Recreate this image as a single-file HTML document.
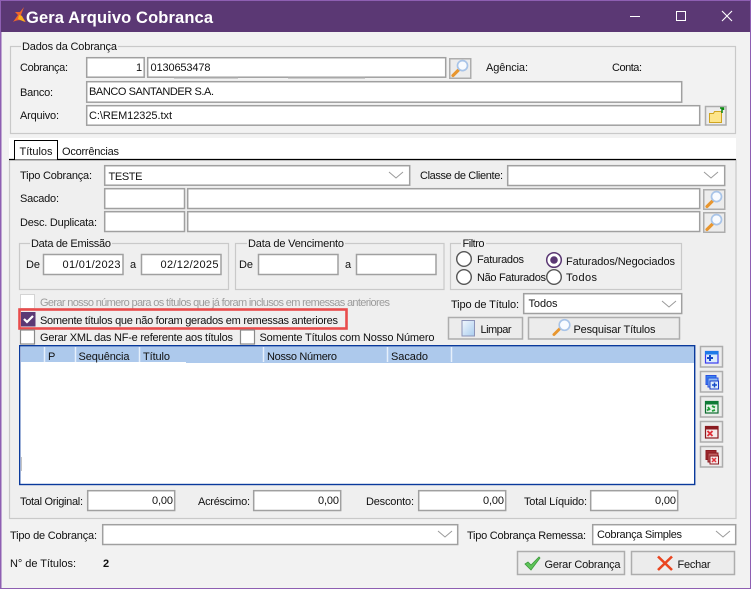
<!DOCTYPE html>
<html><head><meta charset="utf-8">
<style>
html,body{margin:0;padding:0;width:751px;height:589px;overflow:hidden;background:#f2f2f2}
svg{display:block}
text{font-family:"Liberation Sans",sans-serif;font-size:11px;fill:#111}
.f{fill:#fff;stroke:#a0a0a0;stroke-width:1.5}
.g{fill:none;stroke:#c9c9c9;stroke-width:1.2}
.b{fill:#ececec;stroke:#adadad;stroke-width:1.5}
.r{fill:#fff;stroke:#555;stroke-width:1.4}
.c{fill:#fff;stroke:#8a8a8a;stroke-width:1.2}
.h{stroke:#e6f0fb;stroke-width:1.5}
</style></head><body>
<svg width="751" height="589" viewBox="0 0 751 589" xmlns="http://www.w3.org/2000/svg">
<defs>
<linearGradient id="lg" x1="0" y1="0" x2="1" y2="1"><stop offset="0" stop-color="#f2f7fd"/><stop offset="1" stop-color="#a9cdef"/></linearGradient>
<g id="mag"><rect width="21" height="19.500" class="b" x=".75" y=".75"/><path d="M4 17.500L10 11.500" stroke="#e8962e" stroke-width="3.200" stroke-linecap="round"/><circle cx="13.500" cy="7.600" r="5" fill="#f8fbff" stroke="#a8c4e8" stroke-width="1.700"/></g>
<g id="chev"><path d="M0 0l7 6 7-6" fill="none" stroke="#9a9a9a" stroke-width="1"/></g>
</defs>
<!-- window -->
<rect width="751" height="589" fill="#8e5fb2"/>
<rect x="1.500" y="1" width="748.500" height="587" fill="#f2f2f2"/>
<rect x="1" y="1" width="749" height="31" fill="#5b3874"/>
<path d="M13 22l5-7 -3-3h5l4-5-3 8 5 7c-4-2-8-3-13 0z" fill="#f0662a"/><path d="M19 15l3 1 3 6-7-3z" fill="#f7b21c"/>
<text x="26" y="23" textLength="187" style="font-size:16.500px;font-weight:bold;fill:#fff">Gera Arquivo Cobranca</text>
<path d="M630 16.500h10" stroke="#fff" stroke-width="1"/>
<rect x="676.500" y="11.500" width="9" height="9" fill="none" stroke="#fff"/>
<path d="M722 11l10 10M732 11l-10 10" stroke="#fff" stroke-width="1.100"/>

<!-- dados -->
<rect x="10.500" y="46.500" width="725" height="87" class="g"/>
<rect x="21" y="40" width="97" height="12" fill="#f2f2f2"/>
<text x="22" y="50" textLength="95">Dados da Cobrança</text>
<text x="20" y="71" textLength="48">Cobrança:</text>
<rect x="86.700" y="57.700" width="57.500" height="19.500" class="f"/>
<text x="136" y="71" textLength="6">1</text>
<rect x="147.700" y="57.700" width="298" height="19.500" class="f"/>
<text x="150.500" y="71" textLength="60">0130653478</text>
<path d="M174 77.500h64M288 77.500h77" stroke="#a8a8a8" stroke-width="2"/>
<use href="#mag" x="449" y="58"/>
<text x="486" y="71" textLength="42">Agência:</text>
<text x="612" y="71" textLength="30">Conta:</text>
<text x="20" y="96" textLength="33">Banco:</text>
<rect x="86.700" y="81.700" width="595" height="20.500" class="f"/>
<text x="89" y="95" textLength="125">BANCO SANTANDER S.A.</text>
<text x="20" y="119" textLength="39">Arquivo:</text>
<rect x="86.700" y="105.700" width="613" height="19.500" class="f"/>
<text x="89" y="119" textLength="83">C:\REM12325.txt</text>
<rect x="705.500" y="106.500" width="20.500" height="18.500" class="b"/>
<path d="M709.500 113.500h4l1-2h7v11h-12z" fill="#fde58a" stroke="#d0a520"/>
<path d="M722 108v5M720 108h3.500v2" stroke="#0a8a10" stroke-width="1.500" fill="none"/>

<!-- tabs -->
<rect x="9" y="138" width="727" height="21" fill="#fff"/>
<rect x="9.500" y="160" width="726.500" height="358.500" fill="#efefef" stroke="#c9c9c9" stroke-width="1.200"/>
<path d="M9 159.500h727" stroke="#000" stroke-width="1.200"/>
<path d="M14.500 159.500V140.500H57.500V159.500" fill="#fff" stroke="#000" stroke-width="1"/>
<text x="19.500" y="155" textLength="33">Títulos</text>
<text x="62" y="155" textLength="57">Ocorrências</text>

<text x="20" y="179" textLength="72">Tipo Cobrança:</text>
<rect x="104.700" y="165.700" width="305" height="19.500" class="f"/>
<text x="108.500" y="180" textLength="34">TESTE</text>
<use href="#chev" x="389" y="172"/>
<text x="420" y="179" textLength="83">Classe de Cliente:</text>
<rect x="507.700" y="165.700" width="217" height="19.800" class="f"/>
<use href="#chev" x="704" y="172"/>
<text x="20" y="202" textLength="39">Sacado:</text>
<rect x="104.700" y="188.700" width="79.800" height="19.800" class="f"/>
<rect x="187.700" y="188.700" width="512" height="19.800" class="f"/>
<use href="#mag" x="703" y="189"/>
<text x="20" y="226" textLength="77">Desc. Duplicata:</text>
<rect x="104.700" y="211.700" width="79.800" height="19.800" class="f"/>
<rect x="187.700" y="211.700" width="512" height="19.800" class="f"/>
<use href="#mag" x="703" y="212"/>

<!-- emissao -->
<rect x="19.500" y="243.500" width="209" height="46" class="g"/>
<rect x="30" y="238" width="82" height="12" fill="#efefef"/>
<text x="31" y="247" textLength="80">Data de Emissão</text>
<text x="26" y="268" textLength="14">De</text>
<rect x="43.500" y="254.500" width="79.500" height="20" class="f"/>
<text x="62.500" y="268" textLength="58">01/01/2023</text>
<text x="130" y="268" textLength="6">a</text>
<rect x="141.500" y="254.500" width="79.500" height="20" class="f"/>
<text x="160.500" y="268" textLength="58">02/12/2025</text>
<!-- vencimento -->
<rect x="235.500" y="243.500" width="208.500" height="46" class="g"/>
<rect x="247" y="238" width="98" height="12" fill="#efefef"/>
<text x="248" y="247" textLength="96">Data de Vencimento</text>
<text x="239" y="268" textLength="14">De</text>
<rect x="258.500" y="254.500" width="79.500" height="20" class="f"/>
<text x="345" y="268" textLength="6">a</text>
<rect x="356.500" y="254.500" width="79.500" height="20" class="f"/>
<!-- filtro -->
<rect x="450.500" y="243.500" width="231" height="46" class="g"/>
<rect x="461" y="238" width="25" height="12" fill="#efefef"/>
<text x="462.500" y="247" textLength="22">Filtro</text>
<circle cx="464" cy="259" r="7.300" class="r"/>
<text x="477" y="263" textLength="47">Faturados</text>
<circle cx="464" cy="277" r="7.300" class="r"/>
<text x="477" y="281" textLength="69">Não Faturados</text>
<circle cx="554" cy="260" r="7.300" fill="#fff" stroke="#5b3874" stroke-width="1.500"/>
<circle cx="554" cy="260" r="3.800" fill="#5b3874"/>
<text x="566" y="265" textLength="109">Faturados/Negociados</text>
<circle cx="554" cy="277" r="7.300" class="r"/>
<text x="566" y="281" textLength="31">Todos</text>

<!-- checks -->
<rect x="20.500" y="294.500" width="14" height="14" fill="#fff" stroke="#d4d4d4"/>
<text x="40" y="306" textLength="350" style="fill:#9c9c9c">Gerar nosso número para os títulos que já foram inclusos em remessas anteriores</text>
<rect x="19.500" y="309.500" width="327" height="19" fill="none" stroke="#e84c4c" stroke-width="2.600"/>
<rect x="21" y="312" width="14.500" height="14.500" fill="#5b3874"/>
<path d="M24 319l3 3 6-6" fill="none" stroke="#fff" stroke-width="2.200"/>
<text x="40" y="324" textLength="298">Somente títulos que não foram gerados em remessas anteriores</text>
<rect x="20.500" y="330" width="14" height="14" class="c"/>
<text x="40" y="341" textLength="193">Gerar XML das NF-e referente aos títulos</text>
<rect x="240.500" y="330" width="14" height="14" class="c"/>
<text x="259.500" y="341" textLength="175">Somente Títulos com Nosso Número</text>
<text x="451" y="308" textLength="68">Tipo de Título:</text>
<rect x="523.700" y="293.700" width="158" height="19.800" class="f"/>
<text x="528.500" y="307" textLength="29">Todos</text>
<use href="#chev" x="662" y="301"/>
<rect x="448.500" y="317.500" width="74" height="21.500" class="b"/>
<rect x="462" y="320.500" width="12.500" height="15.500" fill="url(#lg)" stroke="#8b93b8"/>
<text x="480.500" y="333" textLength="31">Limpar</text>
<rect x="528.500" y="317.500" width="151" height="21.500" class="b"/>
<path d="M554 334.500L560 328.500" stroke="#e8962e" stroke-width="3" stroke-linecap="round"/>
<circle cx="564.500" cy="325" r="5.300" fill="#f8fbff" stroke="#a8c4e8" stroke-width="1.600"/>
<text x="573.500" y="333" textLength="82">Pesquisar Títulos</text>

<!-- grid -->
<rect x="19.700" y="345.700" width="675" height="138.800" fill="#fff" stroke="#0a3a9c" stroke-width="1.400"/>
<rect x="21" y="346.500" width="673" height="16.500" fill="#adc9ec"/>
<rect x="21" y="362" width="165" height="1" fill="#fff"/>
<path class="h" d="M44.500 347v15M75.500 347v15M139.500 347v15M263.500 347v15M387.500 347v15M451.500 347v15"/>
<text x="48" y="360" textLength="7">P</text>
<text x="78.500" y="360" textLength="51">Sequência</text>
<text x="143" y="360" textLength="27">Título</text>
<text x="267" y="360" textLength="70">Nosso Número</text>
<text x="391" y="360" textLength="37">Sacado</text>
<path d="M21.500 457v14" stroke="#c4c4c4"/>

<!-- side buttons -->
<g>
<rect x="700.500" y="346.500" width="22" height="20.500" class="b"/>
<rect x="705.500" y="351.500" width="12.500" height="11.500" fill="#dcecfb" stroke="#3a3cf0" stroke-width="1.200"/><rect x="705" y="351" width="13.500" height="3.500" fill="#1f7ae8"/>
<path d="M707 358h6M710 355v6" stroke="#1448c8" stroke-width="2"/>
<rect x="700.500" y="371.500" width="22" height="20.500" class="b"/>
<rect x="706" y="375.500" width="10" height="9" fill="#3a86ee" stroke="#2a50e0"/><rect x="708" y="378" width="10" height="9" fill="#8fbdf2" stroke="#2a50e0"/><rect x="710" y="381" width="8.500" height="8" fill="#dcecfb" stroke="#1a3cc8"/>
<path d="M712 385h5M714.500 382.500v5" stroke="#1448c8" stroke-width="1.500"/>
<rect x="700.500" y="396.500" width="22" height="20.500" class="b"/>
<rect x="705.500" y="401.500" width="12.500" height="11.500" fill="#e6f4ea" stroke="#0e6a30" stroke-width="1.200"/><rect x="705" y="401" width="13.500" height="3.500" fill="#0e7a36"/>
<path d="M707 410.500l3-2M708 407l2 3M712 406l3 1.500M715 410l-3 1" stroke="#22a03c" stroke-width="1.900" fill="none"/>
<rect x="700.500" y="421.500" width="22" height="20.500" class="b"/>
<rect x="705.500" y="426.500" width="12.500" height="11.500" fill="#f5eaea" stroke="#8a1a20" stroke-width="1.200"/><rect x="705" y="426" width="13.500" height="3.500" fill="#8a1a20"/>
<path d="M707.500 431l5 5M712.500 431l-5 5" stroke="#e0303a" stroke-width="1.900"/>
<rect x="700.500" y="446.500" width="22" height="20.500" class="b"/>
<rect x="706" y="450.500" width="10" height="9" fill="#a02a30" stroke="#8a1a20"/><rect x="708" y="453" width="10" height="9" fill="#c06060" stroke="#8a1a20"/><rect x="710" y="456" width="8.500" height="8" fill="#f5eaea" stroke="#8a1a20"/>
<path d="M712 458l4 4M716 458l-4 4" stroke="#e0303a" stroke-width="1.500"/>
</g>

<!-- totals -->
<text x="20" y="505" textLength="63">Total Original:</text>
<rect x="87.700" y="490.700" width="87" height="19.800" class="f"/>
<text x="152" y="504" textLength="21">0,00</text>
<text x="198" y="505" textLength="52">Acréscimo:</text>
<rect x="253.700" y="490.700" width="87" height="19.800" class="f"/>
<text x="318" y="504" textLength="21">0,00</text>
<text x="366" y="505" textLength="48">Desconto:</text>
<rect x="418.700" y="490.700" width="87" height="19.800" class="f"/>
<text x="483" y="504" textLength="21">0,00</text>
<text x="524" y="505" textLength="63">Total Líquido:</text>
<rect x="590.700" y="490.700" width="87" height="19.800" class="f"/>
<text x="655" y="504" textLength="21">0,00</text>

<!-- bottom -->
<text x="10" y="539" textLength="87">Tipo de Cobrança:</text>
<rect x="102.700" y="524.700" width="355" height="19.800" class="f"/>
<use href="#chev" x="438" y="531"/>
<text x="467" y="539" textLength="119">Tipo Cobrança Remessa:</text>
<rect x="592.700" y="524.700" width="143" height="19.800" class="f"/>
<text x="597" y="538" textLength="85">Cobrança Simples</text>
<use href="#chev" x="716" y="531"/>
<text x="10" y="567" textLength="66">N° de Títulos:</text>
<text x="103" y="567" textLength="7" style="font-weight:bold">2</text>
<rect x="517.500" y="551.500" width="107" height="23" class="b"/>
<path d="M525 564l3-2 3 3 8-8 1 1-9 12z" fill="#5fc55a" stroke="#3d9a3c" stroke-width=".8"/>
<text x="544.500" y="568" textLength="76">Gerar Cobrança</text>
<rect x="631.500" y="551.500" width="103" height="23" class="b"/>
<path d="M658 556.500l14 13.500M672 556.500l-14 13.500" stroke="#ea4520" stroke-width="2.600"/>
<text x="677.500" y="568" textLength="33">Fechar</text>
</svg>
</body></html>
